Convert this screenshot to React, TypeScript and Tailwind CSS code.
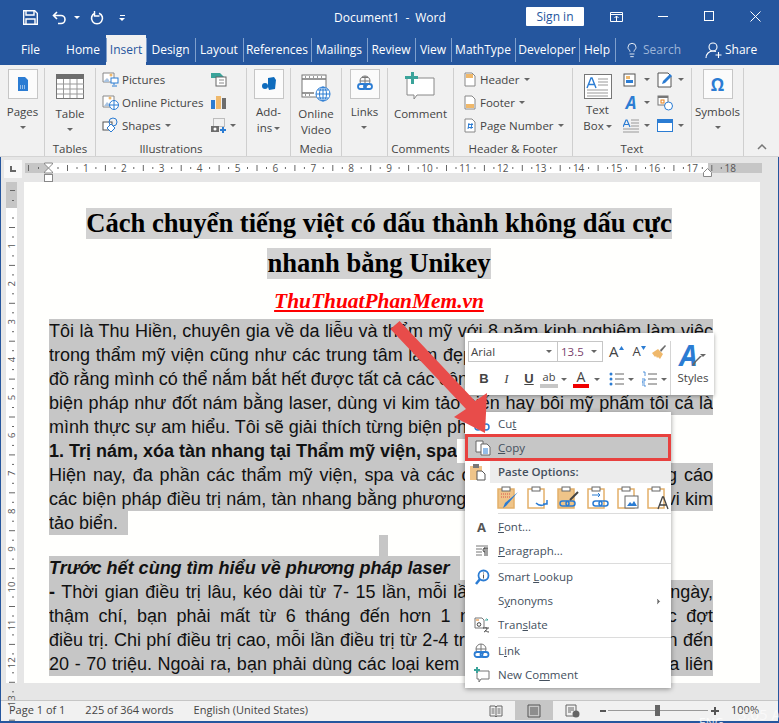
import type { ReactNode } from "react";
import { ChevronRight, Lightbulb } from "lucide-react";

const TABS = [
  { name: "File", w: "w-[59px]" },
  { name: "Home", w: "w-[46px]" },
  { name: "Insert", w: "w-[40px]", active: true },
  { name: "Design", w: "w-[49px]" },
  { name: "Layout", w: "w-[48px]" },
  { name: "References", w: "w-[68px]" },
  { name: "Mailings", w: "w-[56px]" },
  { name: "Review", w: "w-[48px]" },
  { name: "View", w: "w-[36px]" },
  { name: "MathType", w: "w-[64px]" },
  { name: "Developer", w: "w-[64px]" },
  { name: "Help", w: "w-[36px]" },
];

function Caret({ className = "" }: { className?: string }) {
  return <span className={`inline-block h-0 w-0 border-x-[3px] border-t-[3px] border-x-transparent border-t-[#666] ${className}`} />;
}

function Ico({ w = 16, h = 16, children }: { w?: number; h?: number; children: ReactNode }) {
  return (
    <svg width={w} height={h} viewBox={`0 0 ${w} ${h}`} fill="none" className="shrink-0">
      {children}
    </svg>
  );
}

function BigBox({ children }: { children: ReactNode }) {
  return <div className="flex h-[30px] w-[30px] items-center justify-center border border-[#c6c6c6] bg-[#fbfbfb]">{children}</div>;
}

function Group({ w, label, children }: { w: string; label?: string; children: ReactNode }) {
  return (
    <div className={`relative flex h-[88px] flex-col border-r border-[#cfcfcf] ${w}`}>
      <div className="flex flex-1 justify-center">{children}</div>
      <div className="h-[15px] text-center leading-[15px]">{label}</div>
    </div>
  );
}

function BigLabel({ lines, caret = true }: { lines: ReactNode[]; caret?: boolean }) {
  return (
    <div className="text-center leading-[16px]">
      {lines.map((l, i) => (
        <div key={i}>{l}</div>
      ))}
      {caret ? <div className="flex h-[14px] items-center justify-center"><Caret /></div> : null}
    </div>
  );
}

function SmallRow({ icon, children }: { icon: ReactNode; children: ReactNode }) {
  return (
    <div className="flex h-[23px] items-center gap-[3px] whitespace-nowrap">
      {icon}
      {children}
    </div>
  );
}

function Ribbon() {
  return (
    <div className="flex h-[92px] border-b border-[#d4d4d4] bg-[#f1f1f1] pl-px pt-[3px] text-[#444]">
      <Group w="w-[44px]">
        <div className="flex flex-col items-center pt-px">
          <BigBox>
            <Ico>
              <path d="M3 1h7l3 3v11H3z" fill="#2b7cd3" />
              <path d="M5 10h6M5 12h6" stroke="#fff" strokeDasharray="1 1" />
            </Ico>
          </BigBox>
          <div className="mt-[5px]"><BigLabel lines={["Pages"]} /></div>
        </div>
      </Group>
      <Group w="w-[51px]" label="Tables">
        <div className="flex flex-col items-center">
          <Ico w={29} h={31}>
            <rect x=".5" y="6.500" width="27" height="24" fill="#fff" stroke="#777" />
            <rect x="0" y="6" width="28" height="5" fill="#6d6d6d" />
            <path d="M7.500 11v19M14 11v19M21 11v19M1 16h27M1 21h27M1 26h27" stroke="#999" />
          </Ico>
          <div className="mt-[7px]"><BigLabel lines={["Table"]} /></div>
        </div>
      </Group>
      <Group w="w-[151px]" label="Illustrations">
        <div className="flex w-full justify-between pl-[6px] pr-[10px] pt-0">
          <div>
            <SmallRow
              icon={
                <Ico w={17} h={17}>
                  <path d="M1 2h11v9H1z" fill="#fff" stroke="#888" />
                  <circle cx="9" cy="4" r="1.500" fill="#efb86b" />
                  <path d="M2 10l3-3 2 2v2H2z" fill="#a9c4e2" />
                  <rect x="9" y="7" width="7" height="5" fill="#fff" stroke="#2b7cd3" />
                  <path d="M12 12v2M10 15h5" stroke="#2b7cd3" />
                </Ico>
              }
            >
              Pictures
            </SmallRow>
            <SmallRow
              icon={
                <Ico w={17} h={17}>
                  <path d="M1 2h11v11H1z" fill="#fff" stroke="#888" />
                  <circle cx="8" cy="4" r="1.500" fill="#efb86b" />
                  <path d="M2 12l3-4 2 2v2z" fill="#a9c4e2" />
                  <circle cx="12" cy="11" r="4.500" fill="#fff" stroke="#2b7cd3" />
                  <path d="M7.500 11h9M12 6.500v9" stroke="#2b7cd3" />
                </Ico>
              }
            >
              Online Pictures
            </SmallRow>
            <SmallRow
              icon={
                <Ico w={17} h={17}>
                  <rect x="1" y="5" width="9" height="8" fill="#fff" stroke="#555" />
                  <circle cx="11" cy="5" r="4" fill="none" stroke="#2b7cd3" />
                  <path d="M9 7l4 4-4 4-4-4z" fill="#fff" stroke="#2b7cd3" />
                </Ico>
              }
            >
              Shapes <Caret className="ml-px mb-px" />
            </SmallRow>
          </div>
          <div className="flex flex-col items-start">
            <div className="flex h-[23px] items-center">
              <Ico w={17} h={17}>
                <path d="M1 2h9l5 5H1z" fill="#3aa39a" />
                <rect x="6" y="6" width="10" height="9" fill="#fff" stroke="#666" />
                <path d="M9 9h5M9 12h5" stroke="#888" />
              </Ico>
            </div>
            <div className="flex h-[23px] items-center">
              <Ico w={17} h={17}>
                <rect x="1" y="6" width="4" height="9" fill="#2b7cd3" />
                <rect x="6" y="2" width="5" height="13" fill="#efb86b" />
                <rect x="12" y="4" width="4" height="11" fill="#6d6d6d" />
              </Ico>
            </div>
            <div className="flex h-[23px] items-center gap-[3px]">
              <Ico w={17} h={17}>
                <rect x="3.500" y="1.500" width="11" height="8" stroke="#888" strokeDasharray="1 1" />
                <path d="M1 9h8v6H1z" fill="#6d6d6d" />
                <circle cx="5" cy="12" r="1.500" fill="#fff" />
                <path d="M13 10v6M10 13h6" stroke="#2b7cd3" strokeWidth="2" />
              </Ico>
              <Caret />
            </div>
          </div>
        </div>
      </Group>
      <Group w="w-[44px]">
        <div className="flex flex-col items-center pt-px">
          <BigBox>
            <Ico>
              <path d="M7 2l6-1 2 3-1 9-6 1-1-3z" fill="#0f6cbd" />
              <circle cx="4" cy="10" r="3" fill="#0f6cbd" />
            </Ico>
          </BigBox>
          <div className="mt-[5px]"><BigLabel lines={["Add-", <span key="i" className="inline-flex items-center gap-[2px]">ins <Caret /></span>]} caret={false} /></div>
        </div>
      </Group>
      <Group w="w-[51px]" label="Media">
        <div className="flex flex-col items-center">
          <Ico w={30} h={34}>
            <rect x="1" y="7" width="24" height="22" fill="#fff" stroke="#777" />
            <path d="M1 11h24M1 25h12M4 9h1M8 9h1M12 9h1M16 9h1M20 9h1M4 27h1M8 27h1" stroke="#777" strokeWidth="1.500" />
            <circle cx="22" cy="26" r="7" fill="#fff" stroke="#2b7cd3" />
            <path d="M15 26h14M22 19v14M17 22h10M17 30h10" stroke="#2b7cd3" />
            <ellipse cx="22" cy="26" rx="3.500" ry="7" stroke="#2b7cd3" />
          </Ico>
          <div className="mt-[4px]"><BigLabel lines={["Online", "Video"]} caret={false} /></div>
        </div>
      </Group>
      <Group w="w-[46px]">
        <div className="flex flex-col items-center pt-px">
          <BigBox>
            <Ico w={18} h={18}>
              <circle cx="9" cy="6" r="5" stroke="#777" />
              <path d="M4 6h10M9 1v10M6 2.500h6" stroke="#777" />
              <rect x="2" y="9" width="8" height="5" rx="2.500" stroke="#2b7cd3" strokeWidth="1.800" fill="#fbfbfb" />
              <rect x="8" y="9" width="8" height="5" rx="2.500" stroke="#2b7cd3" strokeWidth="1.800" />
            </Ico>
          </BigBox>
          <div className="mt-[5px]"><BigLabel lines={["Links"]} /></div>
        </div>
      </Group>
      <Group w="w-[66px]" label="Comments">
        <div className="flex flex-col items-center pt-[4px]">
          <Ico w={32} h={29}>
            <path d="M3 6h27v17H13l-3 4v-4H3z" fill="#fff" stroke="#888" />
            <path d="M7 0h3v4h4v3h-4v5H7V7H1V4h6z" fill="#3aa39a" />
          </Ico>
          <div className="mt-[5px] leading-[16px]">Comment</div>
        </div>
      </Group>
      <Group w="w-[119px]" label="Header & Footer">
        <div className="w-full pl-[9px]">
          <SmallRow
            icon={
              <Ico w={14} h={17}>
                <path d="M2 2h7l3 3v10H2z" fill="#fff" stroke="#888" />
                <rect x="3" y="3" width="7" height="4" fill="#efb86b" />
              </Ico>
            }
          >
            Header <Caret className="ml-px" />
          </SmallRow>
          <SmallRow
            icon={
              <Ico w={14} h={17}>
                <path d="M2 2h7l3 3v10H2z" fill="#fff" stroke="#888" />
                <rect x="3" y="10" width="8" height="4" fill="#efb86b" />
              </Ico>
            }
          >
            Footer <Caret className="ml-px" />
          </SmallRow>
          <SmallRow
            icon={
              <Ico w={14} h={17}>
                <path d="M2 2h7l3 3v10H2z" fill="#fff" stroke="#888" />
                <path d="M5 7.500h5M5 10.500h5M6 6l-1 6M9 6l-1 6" stroke="#2b7cd3" />
              </Ico>
            }
          >
            Page Number <Caret className="ml-px" />
          </SmallRow>
        </div>
      </Group>
      <Group w="w-[119px]" label="Text">
        <div className="flex w-full pl-[10px]">
          <div className="flex w-[29px] flex-col items-center pt-[6px]">
            <Ico w={28} h={25}>
              <rect x=".5" y=".5" width="27" height="24" fill="#fff" stroke="#777" />
              <path d="M3 14l4-10h1l4 10M5 10.500h5" stroke="#2b7cd3" strokeWidth="1.400" />
              <path d="M14 5h10M14 8h10M14 11h10M3 16h21M3 19h21M3 22h21" stroke="#999" />
            </Ico>
            <div className="mt-[3px] whitespace-nowrap text-center leading-[16px]">
              Text<br />
              <span className="inline-flex items-center gap-[2px]">Box <Caret /></span>
            </div>
          </div>
          <div className="ml-[11px] flex flex-col">
            <div className="flex h-[23px] items-center gap-[5px]">
              <Ico>
                <rect x="1" y="2" width="11" height="12" fill="#fff" stroke="#555" />
                <rect x="3" y="4" width="4" height="3" fill="#efb86b" />
                <rect x="3" y="8" width="7" height="3" fill="#2b7cd3" />
              </Ico>
              <Caret />
            </div>
            <div className="flex h-[23px] items-center gap-[5px]">
              <span className="w-4 text-center text-[17px] font-bold italic leading-none text-[#2b7cd3]">A</span>
              <Caret />
            </div>
            <div className="flex h-[23px] items-center gap-[5px]">
              <Ico>
                <path d="M0 9l3-7h1l3 7M1.500 6.500h4" stroke="#2b7cd3" strokeWidth="1.200" />
                <path d="M8 2h8M8 5h8M8 8h8M0 11h16M0 14h16" stroke="#999" />
              </Ico>
              <Caret />
            </div>
          </div>
          <div className="ml-[7px] flex flex-col">
            <div className="flex h-[23px] items-center gap-[5px]">
              <Ico>
                <path d="M1 1h10l3 3v11H1z" fill="#fff" stroke="#555" />
                <path d="M13 2l2 2-7 7-3 1 1-3z" fill="#2b7cd3" />
              </Ico>
              <Caret />
            </div>
            <div className="flex h-[23px] items-center gap-[5px]">
              <Ico>
                <rect x="1" y="1" width="10" height="9" fill="#fff" stroke="#777" />
                <rect x="1" y="1" width="10" height="2" fill="#777" />
                <rect x="4" y="5" width="3" height="3" stroke="#e8801a" />
                <circle cx="11.500" cy="11" r="4" fill="#fff" stroke="#2b7cd3" />
              </Ico>
            </div>
            <div className="flex h-[23px] items-center gap-[5px]">
              <Ico>
                <rect x=".500" y="1.500" width="15" height="12" fill="#fff" stroke="#2b7cd3" />
                <rect x="1" y="2" width="14" height="3" fill="#2b7cd3" />
              </Ico>
              <Caret />
            </div>
          </div>
        </div>
      </Group>
      <Group w="w-[52px]">
        <div className="flex flex-col items-center pt-px">
          <BigBox>
            <span className="text-[17px] font-bold leading-none text-[#2b7cd3]">Ω</span>
          </BigBox>
          <div className="mt-[5px]"><BigLabel lines={["Symbols"]} /></div>
        </div>
      </Group>
      <div className="relative flex-1">
        <svg width="10" height="6" viewBox="0 0 10 6" className="absolute bottom-[6px] right-[12px]">
          <path d="M1 5l4-4 4 4" stroke="#777" strokeWidth="1.500" fill="none" />
        </svg>
      </div>
    </div>
  );
}

const inch = 37.9;

function HRuler() {
  const n = Array.from({ length: 19 }, (_, i) => i);
  return (
    <svg width="779" height="25" className="block">
      <rect x="24" y="6" width="737" height="10" fill="#c6c6c6" />
      <rect x="47" y="6" width="660" height="10" fill="#fff" />
      {n.map((i) => {
        const x = 47 + i * inch;
        return (
          <g key={i}>
            {i > 0 && i < 19 ? (
              <text x={x} y="15" fontSize="10" textAnchor="middle" fill="#555" fontFamily="Open Sans">{i}</text>
            ) : null}
            {i < 18 ? (
              <>
                <rect x={x + 9.5} y="10" width="1" height="2" fill="#666" />
                <rect x={x + 19} y="8" width="1" height="6" fill="#666" />
                <rect x={x + 28.5} y="10" width="1" height="2" fill="#666" />
              </>
            ) : null}
          </g>
        );
      })}
      <rect x="37" y="10" width="1" height="2" fill="#666" />
      <rect x="27" y="8" width="1" height="6" fill="#666" />
      <path d="M43.500 6h8v1l-4 4-4-4zM47.500 11l4 4v1h-8v-1z" fill="#fff" stroke="#888" />
      <rect x="43.500" y="17.500" width="8" height="7" fill="#fff" stroke="#888" />
      <path d="M702.500 19.500v-4l4-4 4 4v4z" fill="#fff" stroke="#888" />
    </svg>
  );
}

function VRuler() {
  const n = Array.from({ length: 14 }, (_, i) => i);
  return (
    <svg width="11" height="501" className="block overflow-visible">
      <rect width="11" height="501" fill="#fff" />
      <rect width="11" height="26" fill="#c6c6c6" />
      <rect x="4" y="8" width="5" height="1" fill="#666" />
      <rect x="6" y="18" width="2" height="1" fill="#666" />
      {n.map((i) => {
        const y = 26 + i * inch;
        return (
          <g key={i}>
            {i > 0 ? (
              <text x="6" y={y + 3} fontSize="9.500" textAnchor="middle" fill="#555" fontFamily="Open Sans" transform={`rotate(-90 6 ${y})`}>{i}</text>
            ) : null}
            <rect x="6" y={y + 9.5} width="2" height="1" fill="#666" />
            <rect x="3" y={y + 19} width="6" height="1" fill="#666" />
            <rect x="6" y={y + 28.5} width="2" height="1" fill="#666" />
          </g>
        );
      })}
    </svg>
  );
}

function Line({ children, fit, bold, italic }: { children: ReactNode; fit?: boolean; bold?: boolean; italic?: boolean }) {
  return (
    <div
      className={`h-[24px] overflow-hidden whitespace-nowrap bg-[#c6c6c6] leading-[25px] ${fit ? "w-fit" : "w-[664px] text-justify [word-spacing:-0.6px] [text-align-last:justify]"} ${bold ? "font-bold" : ""} ${italic ? "italic" : ""}`}
    >
      {children}
    </div>
  );
}

function Page() {
  return (
    <div className="h-[501px] w-[736px] overflow-hidden bg-[#fffffd] pl-[25px] pt-[26px] font-['Liberation_Sans',Arial,sans-serif] text-[18px] text-[#111]">
      <div className="w-[660px] text-center font-['Liberation_Serif',serif] text-[26.6px] font-bold leading-[31px] text-black">
        <div><span className="inline-block bg-[#d2d2d2]">Cách chuyển tiếng việt có dấu thành không dấu cực</span></div>
        <div className="mt-[9px]"><span className="inline-block bg-[#d2d2d2]">nhanh bằng Unikey</span></div>
        <div className="h-[40px] text-[21.4px] italic leading-[44px] text-[#ff0000] underline">ThuThuatPhanMem.vn</div>
      </div>
      <Line>Tôi là Thu Hiền, chuyên gia về da liễu và thẩm mỹ với 8 năm kinh nghiệm làm việc</Line>
      <Line>trong thẩm mỹ viện cũng như các trung tâm làm đẹp. Vì vậy, tôi không dám khẳng</Line>
      <Line>đồ rằng mình có thể nắm bắt hết được tất cả các công nghệ, nhưng với những cách</Line>
      <Line>biện pháp như đốt nám bằng laser, dùng vi kim tảo biển hay bôi mỹ phẩm tôi cá là</Line>
      <Line fit>mình thực sự am hiểu. Tôi sẽ giải thích từng biện pháp</Line>
      <Line fit bold>1. Trị nám, xóa tàn nhang tại Thẩm mỹ viện, spa</Line>
      <Line>Hiện nay, đa phần các thẩm mỹ viện, spa và các cơ sở làm đẹp đều quảng cáo</Line>
      <Line>các biện pháp điều trị nám, tàn nhang bằng phương pháp laser hay sử dụng vi kim</Line>
      <Line fit>tảo biển.&nbsp;&nbsp;</Line>
      <div className="flex h-[21px] w-[669px] justify-center"><div className="h-full w-[9px] bg-[#c6c6c6]" /></div>
      <Line fit bold italic>Trước hết cùng tìm hiểu về phương pháp laser&nbsp;&nbsp;</Line>
      <Line><b>-</b> Thời gian điều trị lâu, kéo dài từ 7- 15 lần, mỗi lần cách nhau khoảng vài ngày,</Line>
      <Line>thậm chí, bạn phải mất từ 6 tháng đến hơn 1 năm mới hoàn thành các đợt</Line>
      <Line>điều trị. Chi phí điều trị cao, mỗi lần điều trị từ 2-4 triệu, tổng chi phí có thể lên đến</Line>
      <Line>20 - 70 triệu. Ngoài ra, bạn phải dùng các loại kem bôi chống nắng, dưỡng da liên</Line>
    </div>
  );
}

function MiniToolbar() {
  return (
    <div className="absolute left-[465px] top-[333px] flex h-[62px] w-[249px] bg-white pl-[3px] pt-[8px] text-[#444] shadow-[0_1px_4px_rgba(0,0,0,0.35)]">
      <div>
        <div className="flex items-center">
          <div className="flex h-[21px] w-[90px] items-center justify-between border border-[#c6c6c6] pl-[2px] pr-[5px]">Arial<Caret /></div>
          <div className="flex h-[21px] w-[45px] items-center justify-between border border-l-0 border-[#c6c6c6] pl-[3px] pr-[5px] text-[#7a3f6d]">13.5<Caret /></div>
          <div className="ml-[6px] flex items-center gap-[5px]">
            <span className="text-[15px] leading-none">A</span>
            <svg width="5" height="4" viewBox="0 0 5 4" className="-ml-[5px] -mt-[8px]"><path d="M0 4l2.500-4L5 4z" fill="#2b7cd3" /></svg>
            <span className="ml-[4px] text-[13px] leading-none">A</span>
            <svg width="5" height="4" viewBox="0 0 5 4" className="-ml-[5px] -mt-[8px]"><path d="M0 0l2.500 4L5 0z" fill="#2b7cd3" /></svg>
            <Ico>
              <path d="M1 9l6-4 5 5-3 5-2-2-1 1-1-2-1 1z" fill="#efb86b" />
              <path d="M9 6l5-5 1 1-5 6z" fill="#6d6d6d" />
            </Ico>
          </div>
        </div>
        <div className="mt-[5px] flex h-[24px] items-center pl-[5px] text-[13px]">
          <b className="w-[22px] text-center font-['Liberation_Sans']">B</b>
          <i className="w-[23px] text-center font-['Liberation_Serif']">I</i>
          <u className="w-[22px] text-center font-['Liberation_Sans'] font-bold">U</u>
          <div className="relative w-[18px] text-center text-[11px] leading-[11px]">
            ab
            <div className="mt-[2px] h-[4px] bg-[#c6c6c6]" />
          </div>
          <Caret className="ml-[3px] mr-[6px]" />
          <div className="w-[16px] text-center text-[14px] leading-[14px]">
            A
            <div className="h-[4px] bg-[#f00000]" />
          </div>
          <Caret className="ml-[5px] mr-[9px]" />
          <Ico>
            <circle cx="2" cy="3" r="1.500" fill="#2b7cd3" />
            <circle cx="2" cy="8" r="1.500" fill="#2b7cd3" />
            <circle cx="2" cy="13" r="1.500" fill="#2b7cd3" />
            <path d="M6 3h9M6 8h9M6 13h9" stroke="#666" />
          </Ico>
          <Caret className="ml-[3px] mr-[8px]" />
          <Ico>
            <path d="M1 1h2v4M0 8h3v2H0v2h3M0 14h3v2" stroke="#2b7cd3" strokeWidth=".8" />
            <path d="M6 3h9M6 8h9M6 13h9" stroke="#666" />
          </Ico>
          <Caret className="ml-[3px]" />
        </div>
      </div>
      <div className="ml-[3px] flex h-[54px] w-[44px] flex-col items-center border-l border-[#d4d4d4] pl-px">
        <div className="relative flex items-center">
          <span className="text-[28px] font-bold italic leading-[28px] text-[#2b7cd3]">A</span>
          <svg width="12" height="12" viewBox="0 0 12 12" className="absolute bottom-[2px] left-[11px]">
            <path d="M11 1L5 7l-2 4-2-1 2-3 6-6z" fill="#666" />
          </svg>
          <Caret className="ml-[3px]" />
        </div>
        <div className="mt-[2px] leading-[14px]">Styles</div>
      </div>
    </div>
  );
}

function MenuItem({ icon, children, arrow }: { icon?: ReactNode; children: ReactNode; arrow?: boolean }) {
  return (
    <div className="relative flex h-[24px] items-center">
      <div className="flex w-[33px] justify-center">{icon}</div>
      <div>{children}</div>
      {arrow ? <ChevronRight className="absolute right-[8px] h-[9px] w-[9px] fill-[#666] text-[#666]" /> : null}
    </div>
  );
}

function Sep() {
  return <div className="ml-[33px] h-px bg-[#dcdcdc]" />;
}

function PasteIcon({ children, skin = true }: { children: ReactNode; skin?: boolean }) {
  return (
    <Ico w={23} h={24}>
      <rect x="1" y="3" width="16" height="19" fill={skin ? "#efc489" : "#fff"} stroke="#e4b06a" strokeWidth="1.500" />
      <rect x="5" y="1" width="8" height="4" fill="#fff" stroke="#666" />
      {children}
    </Ico>
  );
}

function ContextMenu() {
  return (
    <div className="absolute left-[465px] top-[412px] h-[276px] w-[206px] bg-white font-['Open_Sans',sans-serif] text-[11.5px] text-[#44505e] shadow-[0_1px_5px_rgba(0,0,0,0.4)]">
      <div className="h-[1px]" />
      <div className="flex h-[21px] items-center">
        <div className="flex w-[33px] justify-center">
          <Ico w={16} h={14}>
            <circle cx="4" cy="10" r="3" stroke="#2b7cd3" strokeWidth="1.500" />
            <circle cx="12" cy="10" r="3" stroke="#2b7cd3" strokeWidth="1.500" />
            <path d="M5 8l6-7M11 8L5 1" stroke="#777" />
          </Ico>
        </div>
        <div>Cu<u>t</u></div>
      </div>
      <div className="flex h-[27px] items-center border-[3px] border-[#e8413f] bg-[#c6c6c6]">
        <div className="flex w-[30px] justify-center">
          <Ico>
            <path d="M1 1h7v11H1z" fill="#fff" stroke="#666" />
            <path d="M6 4h6l3 3v8H6z" fill="#fff" stroke="#666" />
            <path d="M8 9h5M8 11h5M8 13h5" stroke="#2b7cd3" />
          </Ico>
        </div>
        <div><u>C</u>opy</div>
      </div>
      <div className="flex h-[22px]">
        <div className="flex w-[25px] justify-center pl-[2px] pt-[2px]">
          <Ico w={19} h={18}>
            <rect x="1" y="3" width="12" height="14" fill="#efc489" />
            <rect x="4" y="1" width="6" height="4" fill="#777" />
            <path d="M8 8h5l3 3v6H8z" fill="#fff" stroke="#555" />
          </Ico>
        </div>
        <div className="flex flex-1 items-center bg-[#ececec] pl-[8px] font-semibold">Paste Options:</div>
      </div>
      <div className="flex h-[30px] items-center gap-[7px] pl-[32px]">
        <PasteIcon>
          <path d="M4 8h9M4 11h9" stroke="#d9534f" strokeDasharray="1 1" />
          <path d="M21 6L9 20l-3 2 2-5z" fill="#2b7cd3" />
        </PasteIcon>
        <PasteIcon skin={false}>
          <path d="M9 17c3 3 7 3 11 0M20 14v4h-4" stroke="#2b7cd3" strokeWidth="1.500" />
        </PasteIcon>
        <PasteIcon>
          <rect x="3" y="15" width="9" height="5" rx="2.500" stroke="#2b7cd3" strokeWidth="1.500" />
          <rect x="9" y="15" width="9" height="5" rx="2.500" stroke="#2b7cd3" strokeWidth="1.500" />
          <path d="M21 6l-8 8" stroke="#444" strokeWidth="2" />
        </PasteIcon>
        <PasteIcon skin={false}>
          <path d="M5 9h8l-2-2M13 9l-2 2" stroke="#2b7cd3" />
          <rect x="6" y="15" width="9" height="5" rx="2.500" stroke="#2b7cd3" strokeWidth="1.500" />
          <rect x="12" y="15" width="9" height="5" rx="2.500" stroke="#2b7cd3" strokeWidth="1.500" />
        </PasteIcon>
        <PasteIcon skin={false}>
          <rect x="8" y="10" width="13" height="12" fill="#fff" stroke="#666" />
          <path d="M10 20l3-4 2 2 2-3 3 5z" fill="#2b7cd3" />
        </PasteIcon>
        <PasteIcon skin={false}>
          <path d="M11 23l4.500-12h1L21 23M12.500 19h7" stroke="#444" strokeWidth="1.300" />
        </PasteIcon>
      </div>
      <Sep />
      <div className="h-[1px]" />
      <MenuItem icon={<span className="text-[13px] font-bold leading-none text-[#555]">A</span>}><u>F</u>ont...</MenuItem>
      <MenuItem
        icon={
          <Ico w={14} h={14}>
            <path d="M1 2h12M1 5h6M1 8h6M1 11h6" stroke="#777" />
            <path d="M9 4h4M10 4v8M12 4v8M10 4a2 2 0 0 0 0 4" stroke="#444" />
          </Ico>
        }
      >
        <u>P</u>aragraph...
      </MenuItem>
      <Sep />
      <div className="h-[1px]" />
      <MenuItem
        icon={
          <Ico>
            <circle cx="9.500" cy="6.500" r="5" stroke="#2b7cd3" strokeWidth="1.800" />
            <path d="M6 10l-4 5" stroke="#2b7cd3" strokeWidth="2.500" />
            <path d="M9.500 3.500v1M9.500 5.500v4" stroke="#555" />
          </Ico>
        }
      >
        Smart <u>L</u>ookup
      </MenuItem>
      <MenuItem arrow>S<u>y</u>nonyms</MenuItem>
      <MenuItem
        icon={
          <Ico>
            <path d="M1 1h7l2 2v8H1z" fill="#fff" stroke="#777" />
            <path d="M2 3h3" stroke="#e8801a" />
            <circle cx="5" cy="7.500" r="1.800" stroke="#444" />
            <path d="M9 11h6M12 10v1M10 15c2-1 3-2 3-4M11 13c1 1 2 2 4 2" stroke="#444" />
            <path d="M11 3h3M14 3l-1.500-1.500" stroke="#3aa39a" />
          </Ico>
        }
      >
        Tran<u>s</u>late
      </MenuItem>
      <Sep />
      <div className="h-[1px]" />
      <MenuItem
        icon={
          <Ico w={17} h={17}>
            <circle cx="8" cy="6" r="5" stroke="#777" />
            <path d="M3 6h10M8 1v10" stroke="#777" />
            <rect x="1.500" y="9" width="8" height="5" rx="2.500" fill="#fff" stroke="#2b7cd3" strokeWidth="1.800" />
            <rect x="7.500" y="9" width="8" height="5" rx="2.500" stroke="#2b7cd3" strokeWidth="1.800" />
          </Ico>
        }
      >
        L<u>i</u>nk
      </MenuItem>
      <MenuItem
        icon={
          <Ico w={16} h={16}>
            <path d="M3 4h12v8H7l-2 3v-3H3z" fill="#fff" stroke="#777" />
            <path d="M3 0v6M0 3h6" stroke="#3aa39a" strokeWidth="2" />
          </Ico>
        }
      >
        New Co<u>m</u>ment
      </MenuItem>
    </div>
  );
}

function StatusBar() {
  return (
    <div className="flex h-[21px] items-center border-t border-[#c6c6c6] bg-[#f1f1f1] pb-px text-[11px] text-[#444]">
      <span className="ml-[8px]">Page 1 of 1</span>
      <span className="ml-[20px]">225 of 364 words</span>
      <span className="ml-[20px]">English (United States)</span>
      <div className="ml-auto flex h-full items-center">
        <Ico w={14} h={14}>
          <path d="M1 2h5l1 1 1-1h5v10H8l-1 1-1-1H1zM7 3v10M2.500 5h3M2.500 7h3M2.500 9h3M8.500 5h3M8.500 7h3M8.500 9h3" stroke="#666" />
        </Ico>
        <div className="ml-[12px] flex h-full w-[38px] items-center justify-center bg-[#c6c6c6]">
          <Ico w={14} h={14}>
            <path d="M1 1h12v12H1zM3 4h8M3 6h8M3 8h8M3 10h8" stroke="#555" />
          </Ico>
        </div>
        <div className="ml-[12px]">
          <Ico w={15} h={14}>
            <path d="M1 1h10v11H1zM3 4h6M3 6h6M3 8h3" stroke="#666" />
            <circle cx="11" cy="10" r="3.500" fill="#666" />
          </Ico>
        </div>
        <div className="ml-[20px] h-[2px] w-[6px] bg-[#555]" />
        <div className="relative ml-[2px] flex h-full w-[100px] items-center">
          <div className="h-px w-full bg-[#999]" />
          <div className="absolute left-[47px] h-[11px] w-[5px] bg-[#666]" />
        </div>
        <div className="relative ml-[3px] h-[8px] w-[8px]">
          <div className="absolute left-0 top-[3px] h-[2px] w-[8px] bg-[#555]" />
          <div className="absolute left-[3px] top-0 h-[8px] w-[2px] bg-[#555]" />
        </div>
        <span className="ml-[12px] mr-[19px] text-[11px]">100%</span>
      </div>
    </div>
  );
}

export default function App() {
  return (
    <div className="relative h-[723px] w-[779px] overflow-hidden bg-[#25569e] font-['Open_Sans',sans-serif] text-[11.5px]">
      {/* title bar */}
      <div className="relative flex h-[35px] items-center text-white">
        <svg width="15" height="15" viewBox="0 0 15 15" className="ml-[23px]" fill="none">
          <path d="M.7.7h11l2.600 2.600v11H.7z" stroke="#fff" strokeWidth="1.400" />
          <path d="M3 1v4h8V1M3 14V9h9v5" stroke="#fff" strokeWidth="1.400" />
        </svg>
        <svg width="15" height="14" viewBox="0 0 15 14" className="ml-[14px]" fill="none">
          <path d="M5 1L1.500 4.500 5 8M2 4.500h7a4 4 0 0 1 0 8H6" stroke="#fff" strokeWidth="1.600" />
        </svg>
        <Caret className="ml-[7px] border-t-white" />
        <svg width="14" height="14" viewBox="0 0 14 14" className="ml-[10px]" fill="none">
          <path d="M9 2.200a5.500 5.500 0 1 1-4 0" stroke="#fff" strokeWidth="1.600" />
          <path d="M4.500 0v5h5" stroke="#fff" strokeWidth="1.400" />
        </svg>
        <div className="ml-[15px] flex flex-col items-center gap-[2px]">
          <div className="h-px w-[5px] bg-white" />
          <Caret className="border-t-white" />
        </div>
        <div className="absolute left-[334px] flex gap-[6px] text-[12px]">
          <span>Document1</span>
          <span>-</span>
          <span>Word</span>
        </div>
        <div className="absolute left-[526px] top-[7px] flex h-[19px] w-[58px] items-center justify-center rounded-[1px] bg-white text-[12px] text-[#25569e]">Sign in</div>
        <svg width="13" height="10" viewBox="0 0 13 10" className="absolute left-[610px] top-[12px]" fill="none">
          <path d="M.5.500h12v9H.5zM.5 2.500h12M6.500 9V4M4.500 6l2-2 2 2" stroke="#fff" />
        </svg>
        <div className="absolute left-[658px] top-[16px] h-px w-[10px] bg-white" />
        <div className="absolute left-[704px] top-[11px] h-[10px] w-[10px] border border-white" />
        <svg width="11" height="11" viewBox="0 0 11 11" className="absolute left-[750px] top-[11px]" fill="none">
          <path d="M.5.500l10 10M10.500.500l-10 10" stroke="#fff" />
        </svg>
      </div>
      {/* tabs */}
      <div className="relative flex h-[30px] pl-px text-[12px] text-white">
        {TABS.map((tab) =>
          tab.active ? (
            <div key={tab.name} className={`${tab.w} bg-[#f1f1f1] text-center leading-[30px] text-[#25569e]`}>{tab.name}</div>
          ) : (
            <div key={tab.name} className={`${tab.w} flex items-center justify-center`}>
              <span>{tab.name}</span>
            </div>
          ),
        )}
        <div className="absolute left-[624px] top-[6px] flex items-center gap-[3px] text-[#9db5d8]">
          <Lightbulb className="h-[16px] w-[16px] text-white" strokeWidth={1.3} />
          <span>Search</span>
        </div>
        <div className="absolute left-[705px] top-[6px] flex items-center gap-[2px]">
          <svg width="18" height="18" viewBox="0 0 18 18" fill="none">
            <circle cx="8" cy="6" r="4" stroke="#fff" strokeWidth="1.100" />
            <path d="M1 17c0-4 3-7 7-7 1 0 2 .2 3 .6M13.500 11v6M10.500 14h6" stroke="#fff" strokeWidth="1.100" />
          </svg>
          <span>Share</span>
        </div>
        {[106, 146, 195, 243, 311, 367, 415, 451, 515, 579, 615].map((x) => (
          <div key={x} className="absolute top-[3px] h-[24px] w-px bg-[#7f9fcc]" style={{ left: x }} />
        ))}
      </div>
      <Ribbon />
      <div className="relative mx-px h-[25px] bg-[#e6e6e6]">
        <div className="absolute left-[3px] top-[3px] h-[18px] w-[18px] bg-[#f8f8f8]">
          <div className="absolute left-[6px] top-[6px] h-[6px] w-[6px] border-b-2 border-l-2 border-[#666]" />
        </div>
        <HRuler />
      </div>
      <div className="mx-px flex h-[518px] bg-[#e6e6e6]">
        <div className="ml-[5px] w-[18px]"><VRuler /></div>
        <Page />
      </div>
      <div className="mx-px"><StatusBar /></div>
      <ContextMenu />
      <MiniToolbar />
      <svg width="779" height="723" className="pointer-events-none absolute left-0 top-0">
        <polygon points="399.6,321 475,401 487,393 485,433 454,417 466,409 390.4,329" fill="#e84c4a" />
      </svg>
      {/* clock and language of the desktop behind, faintly showing through */}
      <div className="pointer-events-none absolute left-[738px] top-[703px] whitespace-nowrap text-[15px] text-white/60">3:05 AM</div>
      <div className="pointer-events-none absolute left-[699px] top-[714px] text-[12px] text-white/80">ENG</div>
    </div>
  );
}
